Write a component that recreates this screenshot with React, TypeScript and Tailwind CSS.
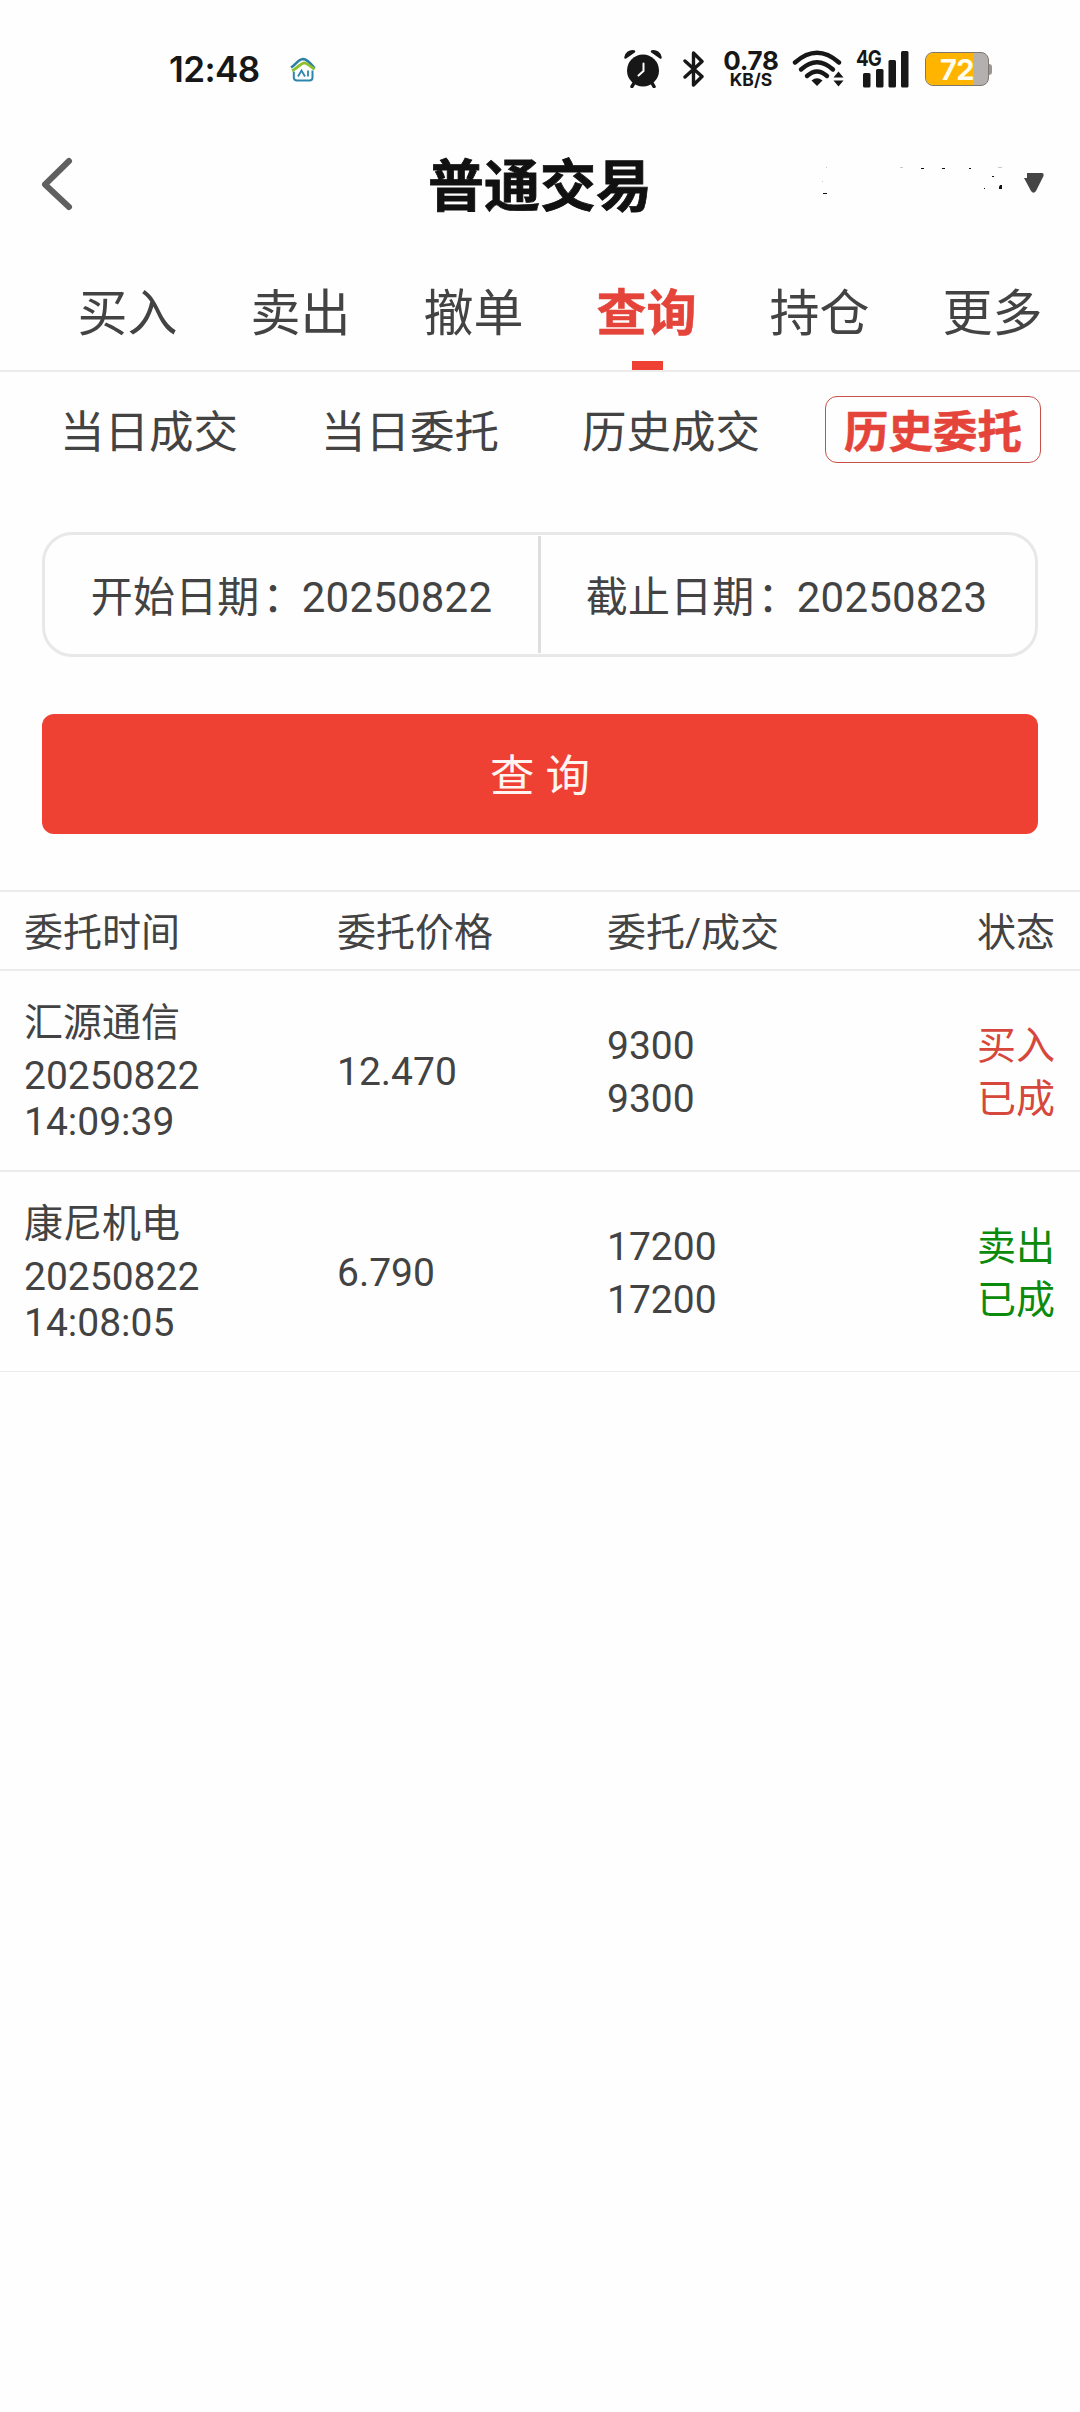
const tabs = ['买入', '卖出', '撤单', '查询', '持仓', '更多'];
const subTabs = ['当日成交', '当日委托', '历史成交'];
const orders = [
  { name: '汇源通信', date: '20250822', time: '14:09:39', price: '12.470', qty: '9300', filled: '9300', side: '买入', status: '已成', tone: 'text-[#d6473c]' },
  { name: '康尼机电', date: '20250822', time: '14:08:05', price: '6.790', qty: '17200', filled: '17200', side: '卖出', status: '已成', tone: 'text-[#0b8a0b]' },
];

function HomeBadge() {
  return (
    <svg width="26" height="26" viewBox="0 0 26 26" fill="none" className="ml-[31px] mt-[1px]">
      <path d="M1 10.500C6 7.500 8 2.500 13 2C16.500 2 20 5.500 24.500 11" stroke="#2b7fa3" strokeWidth="2.600" />
      <path d="M2 13.500C8 11.500 9.500 6.500 14 5.800C17 5.800 20 9 24.500 12.500" stroke="#8fc02f" strokeWidth="2.800" />
      <path d="M3.800 14.500V20.500Q4 23.500 7 23.500H19.500Q22.500 23.500 22.500 20.500V13.500" stroke="#2e86ad" strokeWidth="2" />
      <path d="M8 19.500L11.500 13.500L15 19.500M18 13.500V19.500" stroke="#2e86ad" strokeWidth="1.800" />
    </svg>
  );
}

function AlarmIcon() {
  return (
    <svg width="38" height="38" viewBox="0 0 38 38" className="ml-[365px]">
      <path d="M1.500 7.500A7 7 0 0 1 10 1.500Z M36.500 7.500A7 7 0 0 0 28 1.500Z" fill="#171717" stroke="#171717" strokeWidth="2.500" strokeLinejoin="round" />
      <circle cx="19" cy="20.500" r="16" fill="#171717" />
      <path d="M10 33L8 36.500M28 33L30 36.500" stroke="#171717" strokeWidth="3.500" strokeLinecap="round" />
      <path d="M19.500 13.500V21L14.500 25.500" fill="none" stroke="#fefefe" strokeWidth="2" strokeLinecap="round" strokeLinejoin="round" />
    </svg>
  );
}

function BluetoothIcon() {
  return (
    <svg width="22" height="38" viewBox="0 0 22 38" className="ml-[21px]" fill="none" stroke="#171717" strokeWidth="3.400" strokeLinejoin="round" strokeLinecap="round">
      <path d="M2 11L19 26.500L10.500 35V3L19 11.500L2 27" />
    </svg>
  );
}

function WifiIcon() {
  return (
    <svg width="52" height="38" viewBox="0 0 52 38" className="ml-[12px]" fill="none" stroke="#171717" strokeWidth="4.400" strokeLinecap="round">
      <path d="M3 12.500Q25 -7 47 12.500" />
      <path d="M9 19.500Q25 5 41 19.500" />
      <path d="M15 26Q25 17 35 26" />
      <path d="M25 36L19.500 30.500Q25 26 30.500 30.500Z" fill="#171717" stroke="none" />
      <path d="M41.500 27.500L46.500 21.500L51.500 27.500Z M41.500 30.500L46.500 36.500L51.500 30.500Z" fill="#171717" stroke="none" />
    </svg>
  );
}

function SignalIcon() {
  return (
    <div className="relative ml-[13px] h-[38px] w-[52px]">
      <svg width="52" height="38" viewBox="0 0 52 38" fill="#171717">
        <rect x="6" y="23" width="7.500" height="14.500" rx="1.500" />
        <rect x="19" y="19" width="7.500" height="18.500" rx="1.500" />
        <rect x="31.500" y="10" width="7.500" height="27.500" rx="1.500" />
        <rect x="44" y="1" width="7.500" height="36.500" rx="1.500" />
      </svg>
      <span className="absolute -left-px top-[-2px] origin-left scale-x-[0.85] font-['Inter'] text-[22px] font-bold leading-[20px] tracking-[-1px]">4G</span>
    </div>
  );
}

function Battery() {
  return (
    <div className="ml-[16px] flex items-center">
      <div className="relative h-[34px] w-[64px] rounded-[8px] border border-[#80786c] bg-[#b4b0b0]">
        <div className="h-full w-[48px] rounded-l-[7px] bg-[#ffb400]" />
        <span className="absolute left-[14px] top-0 font-['Inter'] text-[29px] font-bold leading-[34px] tracking-[-0.5px] text-[#fffdf0]">72</span>
      </div>
      <div className="h-[11px] w-[3px] rounded-r-[3px] bg-[#9a9696]" />
    </div>
  );
}

function StatusBar() {
  return (
    <div className="flex h-[138px] items-start pl-[169px] pt-[50px] text-[#171717]">
      <div className="flex h-[38px] w-full items-center">
        <span className="w-[90px] whitespace-nowrap font-['Inter'] text-[35px] font-semibold leading-[38px] tracking-[-0.6px]">12:48</span>
        <HomeBadge />
        <div className="-ml-[57px] flex items-center">
          <AlarmIcon />
          <BluetoothIcon />
          <div className="ml-[17px] flex h-[38px] w-[58px] flex-col items-center font-['Inter']">
            <span className="text-[26px] font-bold leading-[21px] tracking-[-0.2px]">0.78</span>
            <span className="text-[17.500px] font-bold leading-[18px]">KB/S</span>
          </div>
          <WifiIcon />
          <SignalIcon />
          <Battery />
        </div>
      </div>
    </div>
  );
}

function AccountPicker() {
  return (
    <svg width="230" height="40" viewBox="820 160 230 40">
      <g fill="#111111">
        <rect x="823" y="193" width="4" height="1" />
        <rect x="921" y="168" width="3" height="1" />
        <rect x="942" y="168" width="3" height="1" />
        <rect x="969" y="168" width="2" height="1" />
        <rect x="992" y="176" width="2" height="1" />
        <path d="M999 187L1000 185H1002V189H999Z" />
        <rect x="984" y="188" width="1" height="1" />
      </g>
      <g fill="#c8c8c8">
        <rect x="826" y="167" width="1" height="1" />
        <rect x="822" y="181" width="1" height="1" />
        <rect x="900" y="167" width="3" height="1" />
        <rect x="998" y="167" width="4" height="1" />
      </g>
      <path d="M1027 173H1042Q1044 173 1043.500 176L1036 191Q1033.500 194.500 1031 191L1024 178H1027Z" fill="#454545" />
    </svg>
  );
}

function DateField({ label, value }: { label: string; value: string }) {
  return (
    <span className="whitespace-nowrap text-[42px] tracking-[0.2px]">
      {label}
      <span className="-mr-[3px] ml-[3px]">：</span>
      {value}
    </span>
  );
}

export default function App() {
  return (
    <div className="h-[2412px] w-[1080px] overflow-hidden bg-[#fefefe] font-['Roboto','Noto_Sans_CJK_SC',sans-serif] text-[#434343]">
      <StatusBar />

      <header className="grid h-[96px] grid-cols-3 items-center px-[40px]">
        <svg width="34" height="56" viewBox="0 0 34 56" fill="none" stroke="#606060" strokeWidth="6" strokeLinecap="round" strokeLinejoin="round" className="-mt-[4px]">
          <path d="M29 5L5 28.500L29 51" />
        </svg>
        <h1 className="whitespace-nowrap pt-[3px] text-center text-[56px] font-bold leading-[93px] text-[#111111] [-webkit-text-stroke:0.8px_#111111]">普通交易</h1>
        <div className="-mr-[10px] flex justify-end pb-[12px]">
          <AccountPicker />
        </div>
      </header>

      <nav className="flex h-[138px] border-b-2 border-[#ececec] pl-[41px]">
        {tabs.map((t) => (
          <div key={t} className="relative flex w-[173px] shrink-0 justify-center">
            <span className={t === '查询' ? 'h-[136px] whitespace-nowrap text-[50px] font-bold leading-[161px] text-[#e5443a] [-webkit-text-stroke:0.5px_#e5443a]' : 'h-[136px] whitespace-nowrap text-[50px] leading-[161px]'}>{t}</span>
            {t === '查询' && <div className="absolute bottom-0 left-[72px] h-[9px] w-[31px] bg-[#ee4033]" />}
          </div>
        ))}
      </nav>

      <div className="grid h-[118px] grid-cols-[261px_261px_243px_216px] items-center pb-[3px] pl-[60px]">
        {subTabs.map((t) => (
          <span key={t} className="whitespace-nowrap pt-[7px] text-[44.500px] leading-[67px]">{t}</span>
        ))}
        <span className="flex h-[67px] items-center justify-center whitespace-nowrap rounded-[12px] border border-[#c9504a] pt-[7px] text-[44.500px] font-bold leading-[58px] text-[#e5443a] [-webkit-text-stroke:0.5px_#e5443a]">历史委托</span>
      </div>

      <div className="mx-[42px] mt-[42px] flex h-[125px] rounded-[30px] border-[3px] border-[#e8e8e8]">
        <div className="my-px flex w-[496px] items-center justify-center border-r-[3px] border-[#dedede] pt-[5px]">
          <DateField label="开始日期" value="20250822" />
        </div>
        <div className="flex flex-1 items-center justify-center pr-[3px] pt-[5px]">
          <DateField label="截止日期" value="20250823" />
        </div>
      </div>

      <button className="mx-[42px] mt-[57px] flex h-[120px] w-[996px] items-center justify-center rounded-[12px] bg-[#ee4033] pt-[6px] text-[44.500px] text-[#fff4f2]">查 询</button>

      <section className="mt-[56px] border-t-2 border-[#ececec] text-[39px]">
        <div className="flex h-[79px] items-center border-b-2 border-[#ececec] pl-[24px] pr-[25px] pt-[6px]">
          <span className="w-[313px]">委托时间</span>
          <span className="w-[270px]">委托价格</span>
          <span className="flex-1">委托/成交</span>
          <span>状态</span>
        </div>
        {orders.map((o) => (
          <div key={o.name} className="flex h-[201px] items-center border-b-2 border-[#ececec] pl-[24px] pr-[25px] pt-[4px] last:h-[200px] last:border-b">
            <div className="flex w-[313px] flex-col leading-[46px]">
              <span className="mb-[7px]">{o.name}</span>
              <span>{o.date}</span>
              <span>{o.time}</span>
            </div>
            <span className="w-[270px]">{o.price}</span>
            <div className="flex flex-1 flex-col leading-[53px]">
              <span>{o.qty}</span>
              <span>{o.filled}</span>
            </div>
            <div className={`flex flex-col leading-[53px] ${o.tone}`}>
              <span>{o.side}</span>
              <span>{o.status}</span>
            </div>
          </div>
        ))}
      </section>
    </div>
  );
}
